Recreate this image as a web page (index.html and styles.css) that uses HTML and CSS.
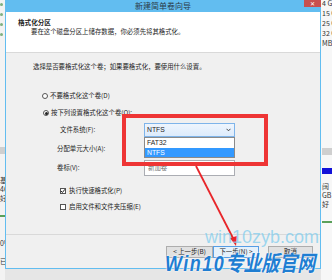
FILE: index.html
```html
<!DOCTYPE html>
<html>
<head>
<meta charset="UTF-8">
<title>新建简单卷向导</title>
<link rel="stylesheet" href="styles.css">
</head>
<body>
<div class="screen">
	<div class="side side-left">
		<span class="dot"></span><span class="dot"></span><span class="dot"></span><span class="dot"></span>
		<div class="band"></div>
		<div class="stxt">基<br>46<br>好</div>
		<div class="gline"></div>
		<div class="stxt">0%<br><br>已</div>
	</div>

	<div class="dialog">
		<div class="titlebar">
			<span></span>
			<span class="ttext">新建简单卷向导</span>
			<span class="close">✕</span>
		</div>
		<div class="header">
			<div class="h-title">格式化分区</div>
			<div class="h-sub">要在这个磁盘分区上储存数据，你必须先将其格式化。</div>
		</div>
		<div class="content">
			<div class="intro">选择是否要格式化这个卷；如果要格式化，要使用什么设置。</div>
			<div class="opt opt1"><span class="radio"></span>不要格式化这个卷(D)</div>
			<div class="opt opt2"><span class="radio on"></span>按下列设置格式化这个卷(O):</div>
			<div class="fields">
				<div class="frow">
					<span class="flabel first">文件系统(F):</span>
					<div class="combo">NTFS
						<svg class="chev" width="5" height="4" viewBox="0 0 5 4"><path d="M0.5 0.8 L2.5 2.8 L4.5 0.8" fill="none" stroke="#333" stroke-width="0.9"/></svg>
						<div class="droplist">
							<div class="ditem">FAT32</div>
							<div class="ditem sel">NTFS</div>
						</div>
					</div>
				</div>
				<div class="frow">
					<span class="flabel">分配单元大小(A):</span>
				</div>
				<div class="frow">
					<span class="flabel">卷标(V):</span>
					<div class="textbox">新加卷</div>
				</div>
			</div>
			<div class="chk chk1"><span class="box"><svg width="6" height="6" viewBox="0 0 6 6"><path d="M1 3 L2.4 4.5 L5 1.2" fill="none" stroke="#222" stroke-width="1"/></svg></span>执行快速格式化(P)</div>
			<div class="chk chk2"><span class="box"></span>启用文件和文件夹压缩(E)</div>
		</div>
		<div class="footer">
			<button type="button" class="btn">&lt; 上一步(B)</button>
			<button type="button" class="btn focus">下一步(N) &gt;</button>
			<button type="button" class="btn cancel">取消</button>
		</div>
	</div>

	<div class="side side-right">
		<div class="rtxt">4 GB<br>15 GB<br>25 GB<br>32 GB<br>MB</div>
		<div class="band"></div>
		<div class="bluebar"></div>
		<div class="rtxt small">阔<br>GB<br>好</div>
		<div class="gline"></div>
	</div>
</div>

<!-- 标注 -->
<div class="redbox"></div>
<svg class="arrow" width="332" height="280" viewBox="0 0 332 280">
	<line x1="196" y1="166" x2="234" y2="240" stroke="#e8262a" stroke-width="1.8"/>
	<polygon points="236,246 230,238 237,236" fill="#e8262a"/>
</svg>
<div class="wm-url">win10zyb.com</div>
<div class="wm-brand"><span class="wm-latin">Win10</span>专业版官网</div>
</body>
</html>
```

FILE: styles.css
```css
* {box-sizing: border-box;}

body {margin: 0;
	width: 332px;
	height: 280px;
	overflow: hidden;
	position: relative;
	background: #e6e6e6;
	font-family: "Noto Sans CJK SC", "Liberation Sans", sans-serif;
	font-size: 6.4px;
	color: #1e1e1e;}

.screen {display: flex; height: 280px;}

/* 뒤쪽 디스크 관리 창 */
.side {display: flex; flex-direction: column; overflow: hidden; white-space: nowrap;}
.side-left {width: 5px; background: #f3f3f3; padding-top: 3px;}
.side-right {width: 11px; background: #f7f7f7; padding-left: 1px;}
.dot {display: block; width: 3px; height: 3px; border-radius: 50%; background: #7fb07f; margin-bottom: 7px;}
.band {height: 7px; background: #cfcfcf; margin-top: 100px;}
.side-left .band {margin-top: 104px;}
.stxt {font-size: 7px; line-height: 9px; margin-top: 22px; color: #333;}
.gline {height: 2px; background: #5aa05a; margin-top: 12px;}
.rtxt {font-size: 7px; line-height: 10px; color: #333; margin-top: -2px;}
.rtxt.small {margin-top: 8px; line-height: 9px;}
.bluebar {height: 6px; background: #1212d8; margin-top: 13px;}

/* 대화상자 */
.dialog {width: 316px;
	height: 269px;
	display: flex;
	flex-direction: column;
	border: 1px solid #62bdf0;
	border-top: none;
	background: #f0f0f0;}

.titlebar {height: 12px;
	margin: 0 -1px;
	background: #62bdf0;
	display: grid;
	grid-template-columns: 1fr auto 1fr;
	font-size: 8px;
	color: #2b3b48;}
.ttext {line-height: 11px;}
.close {justify-self: end;
	width: 17px;
	height: 7px;
	background: #c8504e;
	color: #fff;
	font-size: 6px;
	line-height: 7px;
	text-align: center;}

.header {height: 41px;
	background: #fff;
	border-bottom: 1px solid #d9d9d9;
	padding: 5px 0 0 12px;
	line-height: 10px;}
.h-title {font-weight: bold; font-size: 6.6px;}
.h-sub {padding-left: 13px;}

.content {height: 181px; padding: 9px 0 0 27px; line-height: 10px;}

.opt {display: flex; align-items: center; height: 10px; margin-left: 9px;}
.opt1 {margin-top: 19px;}
.opt2 {margin-top: 7px; margin-left: 10px;}
.radio {width: 6px; height: 6px; border: 1px solid #555; border-radius: 50%; background: #fff; margin-right: 2px; display: flex; align-items: center; justify-content: center;}
.radio.on::after {content: ""; width: 3px; height: 3px; border-radius: 50%; background: #222;}

.fields {margin-top: 4px; display: flex; flex-direction: column; gap: 3px;}
.frow {height: 16px; display: flex; align-items: center;}
.flabel {width: 111px; padding-left: 24px;}
.flabel.first {padding-left: 27px;}

.combo {position: relative;
	width: 91px;
	height: 14px;
	border: 1px solid #7eb4ea;
	background: linear-gradient(#eef5fd, #dcebfc);
	display: flex;
	align-items: center;
	justify-content: space-between;
	padding: 0 3px 0 2px;
	font-family: "Liberation Sans", "Noto Sans CJK SC", sans-serif;
	font-size: 6.8px;}
.droplist {position: absolute;
	top: 13px;
	left: -1px;
	width: 91px;
	border: 1px solid #8a8a8a;
	background: #fff;
	z-index: 2;}
.ditem {height: 9.5px; line-height: 9.5px; padding-left: 2px;}
.ditem.sel {background: #3399ff; color: #fff;}

.textbox {width: 91px;
	height: 16px;
	border: 1px solid #abadb3;
	background: #fff;
	color: #6d6d6d;
	padding-left: 3px;
	line-height: 14px;}

.chk {display: flex; align-items: center; height: 10px; margin-left: 27px;}
.chk1 {margin-top: 10px;}
.chk2 {margin-top: 6px;}
.box {width: 6px; height: 6px; border: 1px solid #555; background: #fff; margin-right: 3px; display: flex;}
.box svg {margin: -1px;}

.footer {flex: 1;
	border-top: 1px solid #d9d9d9;
	display: flex;
	justify-content: flex-end;
	align-items: flex-start;
	padding: 11px 7px 0 0;}
.btn {height: 12px;
	width: 47px;
	padding: 0;
	border: 1px solid #adadad;
	background: #e1e1e1;
	font-family: "Noto Sans CJK SC", sans-serif;
	font-size: 6.4px;
	color: #1e1e1e;
	line-height: 10px;}
.btn.focus {width: 46px; border-color: #569de5; background: #e5f1fb;}
.btn.cancel {width: 45px; margin-left: 9px;}

/* 빨간 표시, 워터마크 */
.redbox {position: absolute;
	left: 122px;
	top: 114px;
	width: 146px;
	height: 52px;
	border: 4px solid #ee3535;}
.arrow {position: absolute; left: 0; top: 0;}
.wm-url {position: absolute;
	left: 205px;
	top: 227px;
	font-family: "Liberation Sans", sans-serif;
	font-size: 18px;
	color: rgba(130, 205, 238, 0.75);}
.wm-brand {position: absolute;
	left: 165px;
	top: 252px;
	font-family: "Liberation Sans", "Noto Sans CJK SC", sans-serif;
	font-weight: bold;
	font-style: italic;
	font-size: 18px;
	line-height: 20px;
	white-space: nowrap;
	color: #1f7ed2;
	text-shadow: 0 0 2px #fff, 0 0 1px #fff;
	transform: scaleY(1.2);
	transform-origin: left top;}
.wm-latin {letter-spacing: 1.5px;}
```
